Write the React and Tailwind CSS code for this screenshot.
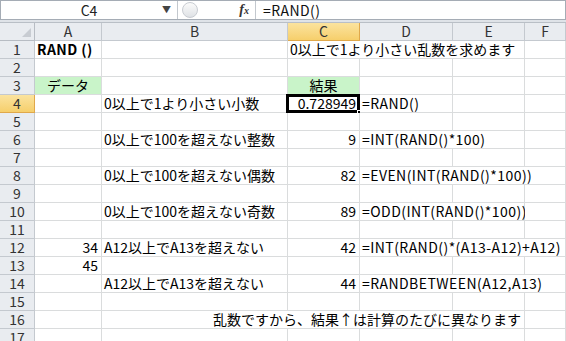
import React from "react";

// column widths: row header, A, B, C, D, E, F
const COLS = "grid-cols-[35px_67px_186px_72px_93px_72px_41px]";

const rows = [
  { n: 1, cells: [{ t: "RAND ()", bold: true, f: true }, {}, { t: "0以上で1より小さい乱数を求めます", span: 3 }, {}] },
  { n: 2, cells: [{}, {}, {}, {}, {}, {}] },
  { n: 3, cells: [{ t: "データ", a: "c", green: true }, {}, { t: "結果", a: "c", green: true }, {}, {}, {}] },
  { n: 4, cells: [{}, { t: "0以上で1より小さい小数" }, { t: "0.728949", a: "r", sel: true }, { t: "=RAND()", f: true }, {}, {}] },
  { n: 5, cells: [{}, {}, {}, {}, {}, {}] },
  { n: 6, cells: [{}, { t: "0以上で100を超えない整数" }, { t: "9", a: "r" }, { t: "=INT(RAND()*100)", span: 2, f: true }, {}] },
  { n: 7, cells: [{}, {}, {}, {}, {}, {}] },
  { n: 8, cells: [{}, { t: "0以上で100を超えない偶数" }, { t: "82", a: "r" }, { t: "=EVEN(INT(RAND()*100))", span: 3, f: true }] },
  { n: 9, cells: [{}, {}, {}, {}, {}, {}] },
  { n: 10, cells: [{}, { t: "0以上で100を超えない奇数" }, { t: "89", a: "r" }, { t: "=ODD(INT(RAND()*100))", span: 2, f: true }, {}] },
  { n: 11, cells: [{}, {}, {}, {}, {}, {}] },
  { n: 12, cells: [{ t: "34", a: "r" }, { t: "A12以上でA13を超えない" }, { t: "42", a: "r" }, { t: "=INT(RAND()*(A13-A12)+A12)", span: 3, f: true }] },
  { n: 13, cells: [{ t: "45", a: "r" }, {}, {}, {}, {}, {}] },
  { n: 14, cells: [{}, { t: "A12以上でA13を超えない" }, { t: "44", a: "r" }, { t: "=RANDBETWEEN(A12,A13)", span: 3, f: true }] },
  { n: 15, cells: [{}, {}, {}, {}, {}, {}] },
  { n: 16, cells: [{}, { t: "乱数ですから、結果↑は計算のたびに異なります", span: 4, a: "r" }, {}] },
  { n: 17, cells: [{}, {}, {}, {}, {}, {}] },
];

const spanCls = { 1: "", 2: "col-span-2", 3: "col-span-3", 4: "col-span-4" };
const alignCls = { l: "justify-start pl-[2px]", r: "justify-end pr-[3px]", c: "justify-center" };

const Cell = ({ c }) => (
  <div
    className={`relative flex items-center whitespace-nowrap border-r border-b border-[#dadcdd] ${spanCls[c.span || 1]} ${alignCls[c.a || "l"]} ${c.green ? "bg-[#c9f4c9]" : "bg-white"} ${c.bold ? "font-bold" : ""} ${c.f ? "tracking-[0.45px]" : ""}`}
  >
    {c.t}
    {c.sel && (
      <>
        <div className="absolute -left-[2px] -top-[1px] -right-[1px] -bottom-[1px] border-[3px] border-black" />
        <div className="absolute -right-[4px] -bottom-[4px] w-[6px] h-[6px] bg-black border border-white" />
      </>
    )}
  </div>
);

export default function App() {
  return (
    <div className="w-[566px] h-[341px] overflow-hidden bg-white text-black text-[14px] leading-[17px] font-['Noto_Sans_CJK_JP','Liberation_Sans',sans-serif]">
      {/* formula bar */}
      <div className="flex h-[20px] items-center border border-[#a5acb5] bg-white">
        <div className="relative flex h-full w-[177px] items-center justify-center border-r border-[#c3c8ce] text-[#222]">
          C4
          <span className="absolute right-[6px] top-[3px] text-[9px] leading-[12px] text-[#444]">▼</span>
        </div>
        <div className="flex h-full w-[78px] items-center border-r border-[#c3c8ce]">
          <div className="ml-[4px] h-[16px] w-[16px] rounded-full border border-[#c8ccd2] bg-gradient-to-b from-[#fbfbfb] to-[#dfe2e6]" />
          <span className="ml-auto mr-[6px] font-['Liberation_Serif',serif] text-[14px] font-bold italic text-[#333]">
            f<span className="text-[10px]">x</span>
          </span>
        </div>
        <div className="pl-[7px] text-[#111] tracking-[0.45px]">=RAND()</div>
      </div>
      <div className="h-[3px] bg-[#dfe3e8] border-b border-[#b9bfc6]" />

      {/* column headers */}
      <div className={`grid ${COLS} h-[18px] text-[#333]`}>
        <div className="relative border-r border-b border-[#b7bcc3] bg-[#e9ecf0]">
          <svg className="absolute right-[3px] bottom-[3px]" width="9" height="9" viewBox="0 0 9 9">
            <polygon points="9,0 9,9 0,9" fill="#c8ccd2" />
          </svg>
        </div>
        {["A", "B", "C", "D", "E", "F"].map((l) => (
          <div
            key={l}
            className={`flex items-center justify-center border-r border-b ${l === "C" ? "bg-gradient-to-b from-[#fbe39e] to-[#f6cf6b] border-[#e0a84a] text-[#333]" : "bg-[#e9ecf0] border-[#c4c9cf]"}`}
          >
            {l}
          </div>
        ))}
      </div>

      {/* rows */}
      {rows.map((r) => (
        <div key={r.n} className={`grid ${COLS} h-[18px]`}>
          <div
            className={`flex items-center justify-center border-r border-b text-[#333] ${r.n === 4 ? "bg-gradient-to-b from-[#fbe39e] to-[#f6cf6b] border-[#e0a84a]" : "bg-[#e9ecf0] border-[#c4c9cf]"}`}
          >
            {r.n}
          </div>
          {r.cells.map((c, i) => (
            <Cell key={i} c={c} />
          ))}
        </div>
      ))}
    </div>
  );
}
